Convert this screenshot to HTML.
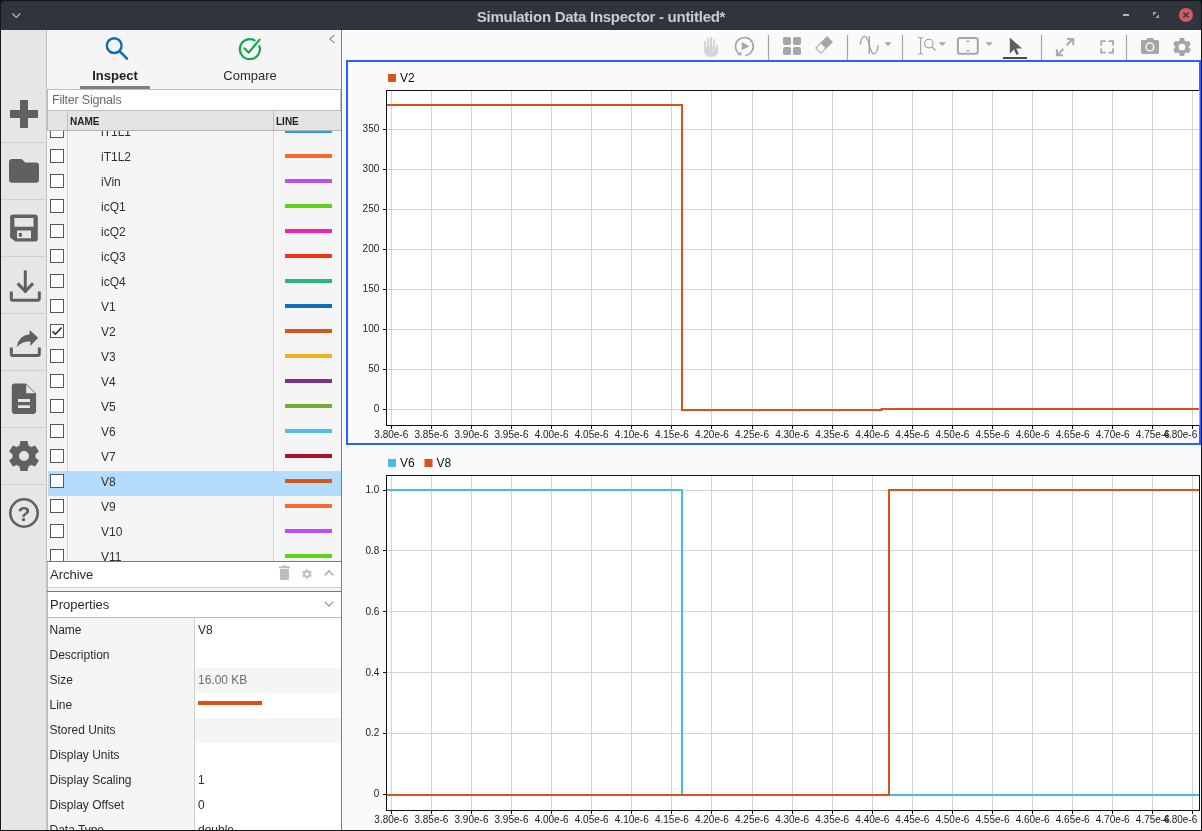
<!DOCTYPE html>
<html lang="en"><head><meta charset="utf-8"><title>Simulation Data Inspector - untitled*</title>
<style>
html,body{margin:0;padding:0}
body{width:1202px;height:831px;overflow:hidden;background:#14161b;font-family:"Liberation Sans",sans-serif;color:#2a2a2a}
#win{will-change:transform;position:absolute;left:0;top:0;width:1202px;height:831px;overflow:hidden;background:#14161b}
#win div,#win span,#win svg{position:absolute;box-sizing:border-box}
#titlebar{left:1px;top:1px;width:1200px;height:29px;background:#2f343f;border-radius:4px 4px 0 0}
#title{left:0;top:0;width:1200px;height:29px;line-height:32px;text-align:center;font-size:15px;font-weight:bold;color:#c6ccd8;letter-spacing:-0.27px;white-space:nowrap}
.tmenu{left:10px;top:11px}
.wmin{left:1122px;top:13px;width:6px;height:2px;background:#b3b9c5}
.wmax{left:1152px;top:11px}
.wclose{left:1178px;top:7px;width:14px;height:14px;border-radius:7px;background:#d35a63}
.wclose svg{left:0;top:0}
#sidebar{left:1px;top:30px;width:46px;height:800px;background:#e6e6e6;border-right:1px solid #c0c0c0}
.lb{left:47px;width:1px;background:#bcbcbc}
#sidebar .sep{left:0;width:45px;height:1px;background:#cfcfcf}
#sidebar svg{left:0;top:0}
#leftbg{left:47px;top:30px;width:294px;height:800px;background:#f5f5f5}
#left{left:0;top:0;width:341px;height:830px}
.tab{top:30px;height:59px}
.tlabel{left:0;width:100%;top:38px;text-align:center;font-size:13px;line-height:16px;color:#2b2b2b;white-space:nowrap}
.tlabel.b{font-weight:bold;color:#222}
.tul{left:0;top:56px;width:70px;height:3px;background:#808080}
.collapse{left:328px;top:34px}
#filter{left:48px;top:89px;width:293px;height:22px;background:#fff;border:1px solid #bdbdbd;border-left:none;font-size:12.5px;line-height:20px;padding-left:4px;color:#6a6a6a;white-space:nowrap;letter-spacing:-0.2px}
#list{left:48px;top:111px;width:293px;height:451px;overflow:hidden;border-bottom:1px solid #7a7a7a}
.row{left:0;width:293px;height:25px}
.row.sel{background:#b3dcfd}
.cb{left:2px;top:3px;width:14px;height:14px;background:#fff;border:1px solid #565656}
.cb svg{left:-1px;top:-1px}
.nm{left:53px;top:0;font-size:12px;line-height:22px;height:25px;color:#2f2f2f;white-space:nowrap}
.ln{left:237px;top:8px;width:47px;height:4px}
.vs1{left:19px;top:0;width:1px;height:450px;background:#d2d2d2}
.vs2{left:225px;top:0;width:1px;height:450px;background:#d2d2d2}
#lhead{left:0;top:0;width:293px;height:20px;background:#e4e4e4;border-bottom:1px solid #b4b4b4}
#lhead span{top:0;font-size:10px;font-weight:bold;line-height:22px;color:#1f1f1f;white-space:nowrap}
.h1{left:22px}.h2{left:228px}
.hs1{left:19px;top:0;width:1px;height:19px;background:#bdbdbd}
.hs2{left:225px;top:0;width:1px;height:19px;background:#bdbdbd}
#archive{left:48px;top:562px;width:293px;height:26px;background:#fff;border-bottom:1px solid #cdcdcd}
#props{left:48px;top:591px;width:293px;height:27px;background:#fff;border-top:1px solid #7a7a7a;border-bottom:1px solid #bdbdbd}
.sect{left:2px;top:0;font-size:13px;line-height:25px;color:#2b2b2b;white-space:nowrap}
#ptab{left:48px;top:618px;width:293px;height:212px;overflow:hidden}
.pvbg{left:147px;top:0;width:146px;height:212px;background:#fff}
.pvs{left:146px;top:0;width:1px;height:212px;background:#d0d0d0}
.prow{left:0;width:293px;height:25px}
.pg{left:147px;top:0;width:146px;height:25px;background:#f5f5f5}
.pk{left:1.5px;top:0;font-size:12px;line-height:24px;color:#2b2b2b;white-space:nowrap}
.pv{left:150px;top:0;font-size:12px;line-height:24px;color:#2b2b2b;white-space:nowrap}
.pv.gr{color:#6c6c6c}
.pline{left:150px;top:8px;width:64px;height:4px;background:#d95319}
#vdiv{left:341px;top:30px;width:1px;height:800px;background:#7c7c7c}
#right{left:342px;top:30px;width:859px;height:800px;background:#fafafa}
#tb{left:348px;top:0}
#plots{left:0;top:30px}

</style></head><body>
<div id="win">
<div id="titlebar"><svg class="tmenu" width="12" height="8" viewBox="0 0 12 8"><path d="M1.300 1.500 L5.300 5.500 L9.300 1.500" fill="none" stroke="#b4b6ba" stroke-width="1.200"/></svg>
<div id="title">Simulation Data Inspector - untitled*</div>
<div class="wmin"></div>
<svg class="wmax" width="6" height="6" viewBox="0 0 6 6"><path d="M0 0 H3.800 L0 3.800 Z M6 6 H2.200 L6 2.200 Z" fill="#a4a7ad"/></svg>
<div class="wclose"><svg width="14" height="14" viewBox="0 0 14 14"><path d="M4.4 4.4 L9.6 9.6 M9.6 4.4 L4.4 9.6" stroke="#2f343f" stroke-width="1.4" fill="none"/></svg></div>
</div>
<div id="sidebar">
<div class="sep" style="top:112px"></div><div class="sep" style="top:169px"></div><div class="sep" style="top:226px"></div><div class="sep" style="top:283px"></div><div class="sep" style="top:340px"></div><div class="sep" style="top:397px"></div><div class="sep" style="top:454px"></div>
<svg width="46" height="520" viewBox="1 30 46 520" fill="#606060">
<path d="M20 100H28V110H38V118H28V128H20V118H10V110H20Z"/>
<path d="M9 162Q9 159 12 159H20.5Q22 159 23 160.2L25.2 162.6H36Q39 162.600 39 165.600V179.800Q39 182.800 36 182.800H12Q9 182.800 9 179.800Z"/>
<path fill-rule="evenodd" d="M13 214.400H35Q37.800 214.400 37.800 217.200V238.800Q37.800 241.600 35 241.600H15.500L10.100 237.400V217.200Q10.100 214.400 13 214.400ZM14.400 218H33.500V226.700H14.400ZM17 230.600H31V238.200H17ZM18.800 232.900V236.800H21.900V232.900Z"/>
<g fill="none" stroke="#606060" stroke-width="3"><path d="M25.300 270.400V291"/><path d="M17.600 283.400L25.300 291.400L33 283.400" stroke-linejoin="miter"/><path d="M11.300 291.600V298.700Q11.300 300.200 12.800 300.200H37.800Q39.300 300.200 39.300 298.700V291.600"/>
<path d="M11.300 347.500V354Q11.300 355.500 12.800 355.500H37.800Q39.300 355.500 39.300 354V347.500"/></g>
<path d="M29.600 329.900L38.200 337.800L30.300 346V341.500Q22 341 16.600 347.200Q18.500 335.500 29.600 334.300Z"/>
<path fill-rule="evenodd" d="M14.600 383.600H26L36.100 393.400V411.100Q36.100 413.900 33.300 413.900H14.600Q11.800 413.900 11.800 411.100V386.400Q11.800 383.600 14.600 383.600ZM26.200 384.600V393.200H35ZM18 399.100H30V402H18ZM18 405.200H30V408.100H18Z"/>
<g transform="translate(24 456)"><path fill-rule="evenodd" d="M-3.600 -15H3.600L4.500 -10.600L7 -9.100L11.200 -10.600L14.800 -4.400L11.500 -1.400V1.400L14.800 4.400L11.200 10.600L7 9.100L4.500 10.600L3.600 15H-3.600L-4.500 10.600L-7 9.100L-11.200 10.600L-14.800 4.400L-11.500 1.400V-1.400L-14.800 -4.400L-11.200 -10.600L-7 -9.100L-4.500 -10.600ZM5 0A5 5 0 1 0 -5 0A5 5 0 1 0 5 0Z"/></g>
<circle cx="24" cy="513" r="13.700" fill="none" stroke="#606060" stroke-width="2.600"/>
<text x="24" y="520.800" font-size="21" font-weight="bold" text-anchor="middle" font-family="Liberation Sans, sans-serif">?</text>
</svg>
</div>
<div id="leftbg"></div>
<div class="lb" style="top:89px;height:42px"></div><div class="lb" style="top:561px;height:269px"></div><div class="lb" style="top:561px;height:1px;background:#7a7a7a"></div><div class="lb" style="top:591px;height:1px;background:#7a7a7a"></div>
<div id="left">
<div class="tab" style="left:80px;width:70px"><svg class="ticon" style="left:23px;top:5px" width="28" height="28" viewBox="0 0 28 28"><circle cx="11.2" cy="10.6" r="7.4" fill="none" stroke="#0b6cbd" stroke-width="2.4"/><path d="M16.6 16.2 L24 23.6" stroke="#0b6cbd" stroke-width="2.6" stroke-linecap="round"/></svg><span class="tlabel b">Inspect</span><div class="tul"></div></div>
<div class="tab" style="left:215px;width:70px"><svg class="ticon" style="left:21px;top:5px" width="28" height="28" viewBox="0 0 28 28"><path d="M23.4 11.2 A10 10 0 1 1 18.6 5.4" fill="none" stroke="#0ea84b" stroke-width="2.2" stroke-linecap="round"/><path d="M8.6 13.4 L12.6 17.6 L23.6 4.6" fill="none" stroke="#0ea84b" stroke-width="2.2" stroke-linecap="round" stroke-linejoin="round"/></svg><span class="tlabel">Compare</span></div>
<svg class="collapse" width="8" height="10" viewBox="0 0 8 10"><path d="M6.5 1 L1.8 5 L6.5 9" fill="none" stroke="#9a9a9a" stroke-width="1.3"/></svg>
<div id="filter">Filter Signals</div>
<div id="list">
<div class="row" style="top:10px"><span class="cb"></span><span class="nm">iT1L1</span><span class="ln" style="background:#1e9ff2"></span></div>
<div class="row" style="top:35px"><span class="cb"></span><span class="nm">iT1L2</span><span class="ln" style="background:#f8682c"></span></div>
<div class="row" style="top:60px"><span class="cb"></span><span class="nm">iVin</span><span class="ln" style="background:#b94ef5"></span></div>
<div class="row" style="top:85px"><span class="cb"></span><span class="nm">icQ1</span><span class="ln" style="background:#60d316"></span></div>
<div class="row" style="top:110px"><span class="cb"></span><span class="nm">icQ2</span><span class="ln" style="background:#f91fb1"></span></div>
<div class="row" style="top:135px"><span class="cb"></span><span class="nm">icQ3</span><span class="ln" style="background:#f43410"></span></div>
<div class="row" style="top:160px"><span class="cb"></span><span class="nm">icQ4</span><span class="ln" style="background:#2db47a"></span></div>
<div class="row" style="top:185px"><span class="cb"></span><span class="nm">V1</span><span class="ln" style="background:#0a6ebd"></span></div>
<div class="row" style="top:210px"><span class="cb"><svg width="14" height="14" viewBox="0 0 14 14"><path d="M2.6 7.4 L5.4 10.2 L11.6 3.4" fill="none" stroke="#222" stroke-width="1.5"/></svg></span><span class="nm">V2</span><span class="ln" style="background:#d4571f"></span></div>
<div class="row" style="top:235px"><span class="cb"></span><span class="nm">V3</span><span class="ln" style="background:#edb120"></span></div>
<div class="row" style="top:260px"><span class="cb"></span><span class="nm">V4</span><span class="ln" style="background:#7e2f8e"></span></div>
<div class="row" style="top:285px"><span class="cb"></span><span class="nm">V5</span><span class="ln" style="background:#77ac30"></span></div>
<div class="row" style="top:310px"><span class="cb"></span><span class="nm">V6</span><span class="ln" style="background:#4dbeee"></span></div>
<div class="row" style="top:335px"><span class="cb"></span><span class="nm">V7</span><span class="ln" style="background:#a2142f"></span></div>
<div class="row sel" style="top:360px"><span class="cb"></span><span class="nm">V8</span><span class="ln" style="background:#d4571f"></span></div>
<div class="row" style="top:385px"><span class="cb"></span><span class="nm">V9</span><span class="ln" style="background:#fb6a2d"></span></div>
<div class="row" style="top:410px"><span class="cb"></span><span class="nm">V10</span><span class="ln" style="background:#b94ef5"></span></div>
<div class="row" style="top:435px"><span class="cb"></span><span class="nm">V11</span><span class="ln" style="background:#60d316"></span></div>
<div class="vs1"></div><div class="vs2"></div>
<div id="lhead"><span class="h1">NAME</span><span class="h2">LINE</span><div class="hs1"></div><div class="hs2"></div></div>
</div>
<div id="archive"><span class="sect">Archive</span>
<svg style="position:absolute;left:229.600px;top:3.400px" width="13" height="16" viewBox="0 0 13 16"><path d="M4.3 0.6 H8.7 V1.6 H12 V3.2 H1 V1.6 H4.3 Z M2 4 H11 V13.6 Q11 15 9.6 15 H3.4 Q2 15 2 13.6 Z" fill="#bdbdbd"/></svg>
<svg style="position:absolute;left:253px;top:6px" width="12" height="12" viewBox="0 0 24 24"><path fill="#bdbdbd" d="M19.14 12.94c.04-.3.06-.61.06-.94 0-.32-.02-.64-.07-.94l2.03-1.58a.49.49 0 0 0 .12-.61l-1.92-3.32a.488.488 0 0 0-.59-.22l-2.39.96c-.5-.38-1.03-.7-1.62-.94l-.36-2.54a.484.484 0 0 0-.48-.41h-3.84c-.24 0-.43.17-.47.41l-.36 2.54c-.59.24-1.13.57-1.62.94l-2.39-.96c-.22-.08-.47 0-.59.22L2.74 8.87c-.12.21-.08.47.12.61l2.03 1.58c-.05.3-.09.63-.09.94s.02.64.07.94l-2.03 1.58a.49.49 0 0 0-.12.61l1.92 3.32c.12.22.37.29.59.22l2.39-.96c.5.38 1.03.7 1.62.94l.36 2.54c.05.24.24.41.48.41h3.84c.24 0 .44-.17.47-.41l.36-2.54c.59-.24 1.13-.56 1.62-.94l2.39.96c.22.08.47 0 .59-.22l1.92-3.32c.12-.22.07-.47-.12-.61l-2.01-1.58zM12 15.6c-1.98 0-3.600-1.62-3.600-3.600s1.62-3.600 3.600-3.600 3.600 1.62 3.600 3.600-1.62 3.600-3.600 3.600z"/></svg>
<svg style="position:absolute;left:276px;top:8px" width="10" height="6" viewBox="0 0 10 6"><path d="M0.7 5.4 L5 1 L9.3 5.4" fill="none" stroke="#9a9a9a" stroke-width="1.3"/></svg>
</div>
<div id="props"><span class="sect">Properties</span>
<svg style="position:absolute;left:276px;top:9px" width="10" height="6" viewBox="0 0 10 6"><path d="M0.7 0.6 L5 5 L9.3 0.6" fill="none" stroke="#9a9a9a" stroke-width="1.3"/></svg>
</div>
<div id="ptab">
<div class="pvbg"></div><div class="pvs"></div>
<div class="prow" style="top:0px"><span class="pk">Name</span><span class="pv">V8</span></div>
<div class="prow" style="top:25px"><span class="pk">Description</span><span class="pv"></span></div>
<div class="prow" style="top:50px"><div class="pg"></div><span class="pk">Size</span><span class="pv gr">16.00 KB</span></div>
<div class="prow" style="top:75px"><span class="pk">Line</span><span class="pline"></span></div>
<div class="prow" style="top:100px"><div class="pg"></div><span class="pk">Stored Units</span><span class="pv gr"></span></div>
<div class="prow" style="top:125px"><span class="pk">Display Units</span><span class="pv"></span></div>
<div class="prow" style="top:150px"><span class="pk">Display Scaling</span><span class="pv">1</span></div>
<div class="prow" style="top:175px"><span class="pk">Display Offset</span><span class="pv">0</span></div>
<div class="prow" style="top:200px"><span class="pk">Data Type</span><span class="pv">double</span></div>
</div>
</div>
<div id="vdiv"></div>
<div id="right">
<svg id="tb" width="512" height="30" viewBox="690 30 512 30" fill="#a6a6a6">
<path d="M768.500 35V60M847.500 35V60M902.500 35V60M1041.500 35V60M1126.500 35V60" stroke="#a6a6a6" stroke-width="1.200" fill="none"/>
<g fill="#d4d4d4"><rect x="704.100" y="41" width="1.900" height="9" rx="0.900"/><rect x="707" y="38.300" width="2" height="11" rx="1"/><rect x="710" y="37" width="2" height="12" rx="1"/><rect x="713.100" y="39" width="1.900" height="10" rx="0.900"/><rect x="716.100" y="44" width="1.800" height="7" rx="0.900"/>
<path d="M704.100 46.800H715V48.800L716.100 48V47H717.900V51Q717.900 56.900 711 56.900Q704.100 56.900 704.100 50.500Z"/></g>
<path d="M712 51.600L715 49.100" stroke="#fafafa" stroke-width="0.800" fill="none"/>
<path d="M745.300 55.300A8.900 8.900 0 1 0 738.700 53.300" fill="none" stroke="#a6a6a6" stroke-width="1.700"/>
<path d="M741.750 42L749.300 46.300L741.750 50.300Z"/>
<path d="M736.800 54.200L741.300 51.800V55.800Z"/>
<rect x="783" y="37" width="8" height="8" rx="1.800"/><rect x="793" y="37" width="8" height="8" rx="1.800"/><rect x="783" y="47" width="8" height="8" rx="1.800"/><rect x="793" y="47" width="8" height="8" rx="1.800"/>
<g transform="translate(824 45) rotate(-45)"><rect x="-8" y="-3.600" width="8" height="7.200" fill="#fff" stroke="#a6a6a6" stroke-width="1.100"/><rect x="-1.200" y="-4.150" width="9.750" height="8.300"/></g>
<path d="M860.300 44.600C861.800 33.500 866.600 33.500 869.250 45S876.600 57 878.300 45.200" fill="none" stroke="#a0a0a0" stroke-width="1.300"/>
<path d="M869.250 36V53.750" stroke="#a0a0a0" stroke-width="1.400" fill="none"/>
<path d="M884.300 42.300H891.700L888 46.100ZM938.600 42.300H946L942.300 46.100ZM985.400 42.300H992.800L989.100 46.100Z"/>
<path d="M918 37.700H923.100M918 54H923.100M920.600 37.700V54" stroke="#a0a0a0" stroke-width="1.100" fill="none"/>
<circle cx="928.850" cy="43.600" r="4.300" fill="none" stroke="#a0a0a0" stroke-width="1.100"/><path d="M932 46.800L935.500 50.600" stroke="#a0a0a0" stroke-width="1.400" fill="none"/>
<rect x="957.900" y="37.900" width="19.900" height="15.900" rx="2.200" fill="none" stroke="#a6a6a6" stroke-width="2"/>
<path d="M965.900 41.900H970L967.950 40ZM965.900 50.100H970L967.950 52Z"/>
<path fill="#5e5e5e" d="M1009.800 37.500L1022 48.500H1016.300L1018.900 53.700L1016.500 54.900L1013.800 49.600L1009.800 53.800Z"/>
<rect x="1003" y="57" width="24" height="2" fill="#4a4a4a"/>
<path d="M1066.600 45.200L1073 38.800M1067.200 38.900H1073.300V45M1063.400 49L1057 55.400M1056.900 49.200V55.200H1063" fill="none" stroke="#a8a8a8" stroke-width="2"/>
<path d="M1101.200 45.600V41.100H1105.700M1108.600 41.100H1113.100V45.600M1113.100 48.200V52.700H1108.600M1105.700 52.700H1101.200V48.200" fill="none" stroke="#a8a8a8" stroke-width="1.800"/>
<path fill-rule="evenodd" d="M1142.500 40H1146.300L1147.600 38.100H1152.800L1154.100 40H1157.500Q1159 40 1159 41.500V52.500Q1159 54 1157.500 54H1142.500Q1141 54 1141 52.500V41.500Q1141 40 1142.500 40ZM1154.500 46.900A4.600 4.600 0 1 0 1145.300 46.900A4.600 4.600 0 1 0 1154.500 46.900ZM1153 46.900A3.100 3.100 0 1 1 1146.800 46.900A3.100 3.100 0 1 1 1153 46.900Z"/>
<g transform="translate(1182 47) scale(0.6)"><path fill-rule="evenodd" d="M-3.600 -15H3.600L4.500 -10.600L7 -9.100L11.200 -10.600L14.800 -4.400L11.500 -1.400V1.400L14.800 4.400L11.200 10.600L7 9.100L4.500 10.600L3.600 15H-3.600L-4.500 10.600L-7 9.100L-11.200 10.600L-14.800 4.400L-11.500 1.400V-1.400L-14.800 -4.400L-11.200 -10.600L-7 -9.100L-4.500 -10.600ZM5.600 0A5.600 5.600 0 1 0 -5.600 0A5.600 5.600 0 1 0 5.600 0Z"/></g>
</svg>
<svg id="plots" width="860" height="771" viewBox="342 60 860 771" font-family="Liberation Sans, sans-serif">
<rect x="347" y="61" width="853" height="383" fill="#fafafa" stroke="#2962ff" stroke-width="2"/>
<rect x="386.5" y="90.5" width="813" height="335" fill="#fff"/>
<rect x="386.5" y="475.5" width="813" height="335" fill="#fff"/>
<path d="M391.5 91V425M391.5 476V810M431.5 91V425M431.5 476V810M471.5 91V425M471.5 476V810M511.5 91V425M511.5 476V810M551.5 91V425M551.5 476V810M591.5 91V425M591.5 476V810M631.5 91V425M631.5 476V810M671.5 91V425M671.5 476V810M711.5 91V425M711.5 476V810M752.5 91V425M752.5 476V810M792.5 91V425M792.5 476V810M832.5 91V425M832.5 476V810M872.5 91V425M872.5 476V810M912.5 91V425M912.5 476V810M952.5 91V425M952.5 476V810M992.5 91V425M992.5 476V810M1032.5 91V425M1032.5 476V810M1072.5 91V425M1072.5 476V810M1112.5 91V425M1112.5 476V810M1152.5 91V425M1152.5 476V810M1192.5 91V425M1192.5 476V810M387 409.5H1199M387 369.5H1199M387 329.5H1199M387 289.5H1199M387 249.5H1199M387 209.5H1199M387 169.5H1199M387 129.5H1199M387 794.5H1199M387 733.5H1199M387 672.5H1199M387 611.5H1199M387 550.5H1199M387 490.5H1199" stroke="#d4d4d4" stroke-width="1" fill="none"/>
<path d="M391.5 425V429M391.5 810V814M431.5 425V429M431.5 810V814M471.5 425V429M471.5 810V814M511.5 425V429M511.5 810V814M551.5 425V429M551.5 810V814M591.5 425V429M591.5 810V814M631.5 425V429M631.5 810V814M671.5 425V429M671.5 810V814M711.5 425V429M711.5 810V814M752.5 425V429M752.5 810V814M792.5 425V429M792.5 810V814M832.5 425V429M832.5 810V814M872.5 425V429M872.5 810V814M912.5 425V429M912.5 810V814M952.5 425V429M952.5 810V814M992.5 425V429M992.5 810V814M1032.5 425V429M1032.5 810V814M1072.5 425V429M1072.5 810V814M1112.5 425V429M1112.5 810V814M1152.5 425V429M1152.5 810V814M1192.5 425V429M1192.5 810V814M383 409.5H386M383 369.5H386M383 329.5H386M383 289.5H386M383 249.5H386M383 209.5H386M383 169.5H386M383 129.5H386M383 794.5H386M383 733.5H386M383 672.5H386M383 611.5H386M383 550.5H386M383 490.5H386" stroke="#111" stroke-width="1" fill="none"/>
<path d="M386 105H682V410H881.5V409H1199" fill="none" stroke="#d95319" stroke-width="2" stroke-linejoin="miter"/>
<path d="M386 490H682V795H1199" fill="none" stroke="#4db8ea" stroke-width="2"/>
<path d="M386 795H889V490H1199" fill="none" stroke="#d95319" stroke-width="2"/>
<path d="M386.5 90V426M386 90.5H1199M386 425.5H1199" fill="none" stroke="#111" stroke-width="1"/>
<rect x="386.5" y="475.5" width="813" height="335" fill="none" stroke="#111" stroke-width="1"/>
<rect x="388" y="74" width="8" height="8" fill="#d95319"/><text x="400" y="82" font-size="12" fill="#111">V2</text>
<rect x="388" y="459" width="8" height="8" fill="#4db8ea"/><text x="400" y="467" font-size="12" fill="#111">V6</text>
<rect x="424.5" y="459" width="8" height="8" fill="#d95319"/><text x="436.6" y="467" font-size="12" fill="#111">V8</text>
<g font-size="10.6" fill="#222" text-anchor="end">
<text transform="translate(379.3 411.8) scale(0.945 1)">0</text><text transform="translate(379.3 371.8) scale(0.945 1)">50</text><text transform="translate(379.3 331.8) scale(0.945 1)">100</text><text transform="translate(379.3 291.8) scale(0.945 1)">150</text><text transform="translate(379.3 251.8) scale(0.945 1)">200</text><text transform="translate(379.3 211.8) scale(0.945 1)">250</text><text transform="translate(379.3 171.8) scale(0.945 1)">300</text><text transform="translate(379.3 131.8) scale(0.945 1)">350</text><text transform="translate(379.3 797.3) scale(0.945 1)">0</text><text transform="translate(379.3 736.4) scale(0.945 1)">0.2</text><text transform="translate(379.3 675.5) scale(0.945 1)">0.4</text><text transform="translate(379.3 614.6) scale(0.945 1)">0.6</text><text transform="translate(379.3 553.7) scale(0.945 1)">0.8</text><text transform="translate(379.3 492.8) scale(0.945 1)">1.0</text>
</g>
<g font-size="10.6" fill="#222" text-anchor="middle">
<text transform="translate(391.3 438) scale(0.945 1)">3.80e-6</text><text transform="translate(431.4 438) scale(0.945 1)">3.85e-6</text><text transform="translate(471.5 438) scale(0.945 1)">3.90e-6</text><text transform="translate(511.5 438) scale(0.945 1)">3.95e-6</text><text transform="translate(551.6 438) scale(0.945 1)">4.00e-6</text><text transform="translate(591.7 438) scale(0.945 1)">4.05e-6</text><text transform="translate(631.8 438) scale(0.945 1)">4.10e-6</text><text transform="translate(671.9 438) scale(0.945 1)">4.15e-6</text><text transform="translate(711.9 438) scale(0.945 1)">4.20e-6</text><text transform="translate(752.0 438) scale(0.945 1)">4.25e-6</text><text transform="translate(792.1 438) scale(0.945 1)">4.30e-6</text><text transform="translate(832.2 438) scale(0.945 1)">4.35e-6</text><text transform="translate(872.3 438) scale(0.945 1)">4.40e-6</text><text transform="translate(912.3 438) scale(0.945 1)">4.45e-6</text><text transform="translate(952.4 438) scale(0.945 1)">4.50e-6</text><text transform="translate(992.5 438) scale(0.945 1)">4.55e-6</text><text transform="translate(1032.6 438) scale(0.945 1)">4.60e-6</text><text transform="translate(1072.7 438) scale(0.945 1)">4.65e-6</text><text transform="translate(1112.7 438) scale(0.945 1)">4.70e-6</text><text transform="translate(1152.8 438) scale(0.945 1)">4.75e-6</text><text transform="translate(1180.3 438) scale(0.945 1)">4.80e-6</text>
<text transform="translate(391.3 823) scale(0.945 1)">3.80e-6</text><text transform="translate(431.4 823) scale(0.945 1)">3.85e-6</text><text transform="translate(471.5 823) scale(0.945 1)">3.90e-6</text><text transform="translate(511.5 823) scale(0.945 1)">3.95e-6</text><text transform="translate(551.6 823) scale(0.945 1)">4.00e-6</text><text transform="translate(591.7 823) scale(0.945 1)">4.05e-6</text><text transform="translate(631.8 823) scale(0.945 1)">4.10e-6</text><text transform="translate(671.9 823) scale(0.945 1)">4.15e-6</text><text transform="translate(711.9 823) scale(0.945 1)">4.20e-6</text><text transform="translate(752.0 823) scale(0.945 1)">4.25e-6</text><text transform="translate(792.1 823) scale(0.945 1)">4.30e-6</text><text transform="translate(832.2 823) scale(0.945 1)">4.35e-6</text><text transform="translate(872.3 823) scale(0.945 1)">4.40e-6</text><text transform="translate(912.3 823) scale(0.945 1)">4.45e-6</text><text transform="translate(952.4 823) scale(0.945 1)">4.50e-6</text><text transform="translate(992.5 823) scale(0.945 1)">4.55e-6</text><text transform="translate(1032.6 823) scale(0.945 1)">4.60e-6</text><text transform="translate(1072.7 823) scale(0.945 1)">4.65e-6</text><text transform="translate(1112.7 823) scale(0.945 1)">4.70e-6</text><text transform="translate(1152.8 823) scale(0.945 1)">4.75e-6</text><text transform="translate(1180.3 823) scale(0.945 1)">4.80e-6</text>
</g>
</svg>
</div>
</div>
</body></html>
